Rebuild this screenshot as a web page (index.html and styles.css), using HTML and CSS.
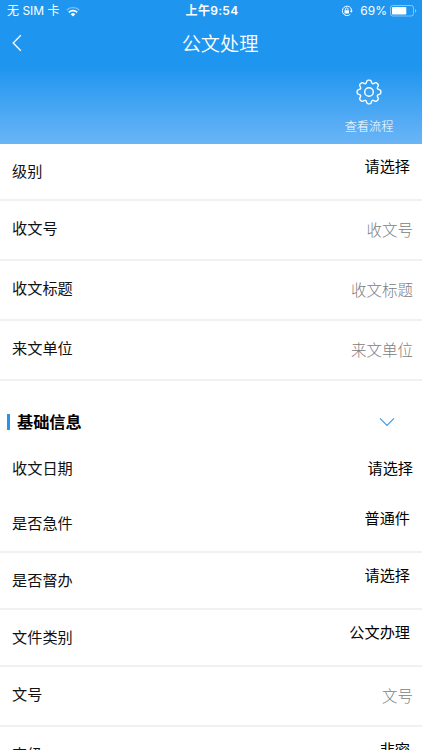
FILE: index.html
```html
<!DOCTYPE html>
<html lang="zh-CN">
<head>
<meta charset="utf-8">
<title>公文处理</title>
<link rel="stylesheet" href="styles.css">
</head>
<body>
<header class="header">
  <div class="status">
    <div class="status-left"><span class="carrier">无 SIM 卡</span>
      <svg class="wifi" width="14" height="11" viewBox="0 0 14 11"><path d="M.7 4.1a9 9 0 0 1 12.6 0" fill="none" stroke="#fff" stroke-opacity=".35" stroke-width="1.6"/><path d="M2.8 6.3a6 6 0 0 1 8.4 0" fill="none" stroke="#fff" stroke-width="1.7"/><path d="M4.7 8.2a3.3 3.3 0 0 1 4.6 0L7 10.5z" fill="#fff"/></svg>
    </div>
    <div class="clock">上午9:54</div>
    <div class="status-right">
      <svg class="lock" width="12" height="12" viewBox="0 0 12 12" fill="none" stroke="#fff"><path d="M9.8 3A4.7 4.7 0 1 0 9.3 9.3M10.2 7A4.7 4.7 0 0 0 9.8 3" stroke-width="1"/><path d="M8.9 5.7h2.9l-1.5 2z" fill="#fff" stroke="none"/><path d="M4.4 5.5V4.2a1.3 1.3 0 0 1 2.6 0v1.3" stroke-width=".9"/><path d="M3.5 5.3h4.4v3.2H3.5z" fill="#fff" stroke="none"/></svg>
      <span class="percent">69%</span>
      <svg class="battery" width="27" height="12" viewBox="0 0 27 12"><rect x=".5" y=".5" width="23" height="10.5" rx="2.3" fill="none" stroke="#fff" stroke-opacity=".45"/><rect x="2" y="2" width="14.3" height="7.5" rx=".7" fill="#fff"/><path d="M25 4v3.7q1.3-.4 1.3-1.85T25 4z" fill="#fff" fill-opacity=".45"/></svg>
    </div>
  </div>
  <div class="navbar">
    <svg class="back" width="10" height="18" viewBox="0 0 10 18"><path d="M8.8 1.3 1.2 9l7.6 7.7" fill="none" stroke="#fff" stroke-width="1.3"/></svg>
    <h1 class="title">公文处理</h1>
  </div>
  <div class="action">
    <svg width="26" height="26" viewBox="-13 -13 26 26" fill="none" stroke="#fff" stroke-width="1.4" stroke-linecap="round">
      <path id="tooth" d="M-3.5-8.45Q-2.7-8.7-2.4-10.2Q-2.1-11.9-.6-11.9H.6Q2.1-11.9 2.4-10.2Q2.7-8.7 3.5-8.45"/>
      <use href="#tooth" transform="rotate(45)"/>
      <use href="#tooth" transform="rotate(90)"/>
      <use href="#tooth" transform="rotate(135)"/>
      <use href="#tooth" transform="rotate(180)"/>
      <use href="#tooth" transform="rotate(225)"/>
      <use href="#tooth" transform="rotate(270)"/>
      <use href="#tooth" transform="rotate(315)"/>
      <circle r="4.3"/>
    </svg>
    <span class="action-label">查看流程</span>
  </div>
</header>
<main>
  <div class="row select"><span class="label">级别</span><span class="value">请选择</span></div>
  <div class="row input"><span class="label">收文号</span><span class="value">收文号</span></div>
  <div class="row input"><span class="label">收文标题</span><span class="value">收文标题</span></div>
  <div class="row input"><span class="label">来文单位</span><span class="value">来文单位</span></div>
  <div class="section">
    <h2 class="section-title">基础信息</h2>
    <svg width="16" height="10" viewBox="0 0 16 10"><path d="M1 1.3 8 8.3l7-7" fill="none" stroke="#3b9ce3" stroke-width="1.2"/></svg>
  </div>
  <div class="row date"><span class="label">收文日期</span><span class="value">请选择</span></div>
  <div class="row select"><span class="label">是否急件</span><span class="value">普通件</span></div>
  <div class="row select"><span class="label">是否督办</span><span class="value">请选择</span></div>
  <div class="row select"><span class="label">文件类别</span><span class="value">公文办理</span></div>
  <div class="row input"><span class="label">文号</span><span class="value">文号</span></div>
  <div class="row select"><span class="label">密级</span><span class="value">非密</span></div>
</main>
</body>
</html>
```
FILE: styles.css
```css
* { box-sizing: border-box; }
body {
  margin: 0;
  height: 750px;
  overflow: hidden;
  background: #fff;
  color: #111;
  font-family: "Noto Sans CJK SC", sans-serif;
}
svg { display: block; flex: none; }
.header {
  height: 144px;
  color: #fff;
  background: linear-gradient(#1e95ef 0, #1e95ef 66px, #6ab5f6 144px);
}
.status {
  display: grid;
  grid-template-columns: 1fr auto 1fr;
  align-items: center;
  height: 22px;
  padding: 0 5px 0 7px;
  font-family: Inter, "Noto Sans CJK SC", sans-serif;
  font-size: 12px;
  line-height: 22px;
}
.status-left, .status-right { display: flex; align-items: center; }
.status-left { gap: 6px; }
.status-right { justify-content: flex-end; }
.battery { margin-top: -1px; }
.lock { margin-top: -1px; }
.clock { font-weight: 600; letter-spacing: .3px; }
.percent { margin: 0 3px 0 7px; }
.navbar {
  display: grid;
  grid-template-columns: 60px 1fr 42px;
  align-items: center;
  height: 44px;
}
.back { margin-left: 12px; margin-top: -2px; }
.title {
  margin: 0;
  text-align: center;
  font-size: 19.2px;
  line-height: 28px;
  font-weight: 350;
  margin-top: -3px;
}
.action {
  display: flex;
  flex-direction: column;
  align-items: center;
  width: 80px;
  margin-left: 329px;
  padding-top: 13px;
}
.action-label { margin-top: 12px; font-size: 12.2px; line-height: 18px; font-weight: 300; }
.row {
  display: flex;
  justify-content: space-between;
  align-items: flex-start;
  height: 57px;
  padding: 16px 9px 0 12px;
  border-bottom: 2px solid #f1f1f1;
  font-size: 15.2px;
  line-height: 20px;
}
.select .value { margin: -5px 3px 0 0; color: #000; }
.input { height: 60px; }
.input .value { margin-top: 2px; font-size: 15.5px; color: #808080; font-weight: 300; }
.date { height: 55px; border-bottom: 0; }
.date .value { color: #000; }
.section {
  display: flex;
  align-items: center;
  justify-content: space-between;
  height: 60px;
  padding: 21px 27px 0 7px;
}
.section-title {
  margin: 0;
  padding-left: 7px;
  border-left: 3px solid #2196ec;
  color: #000;
  font-size: 16.2px;
  line-height: 14px;
  padding-bottom: 2px;
  font-weight: 700;
}
```
